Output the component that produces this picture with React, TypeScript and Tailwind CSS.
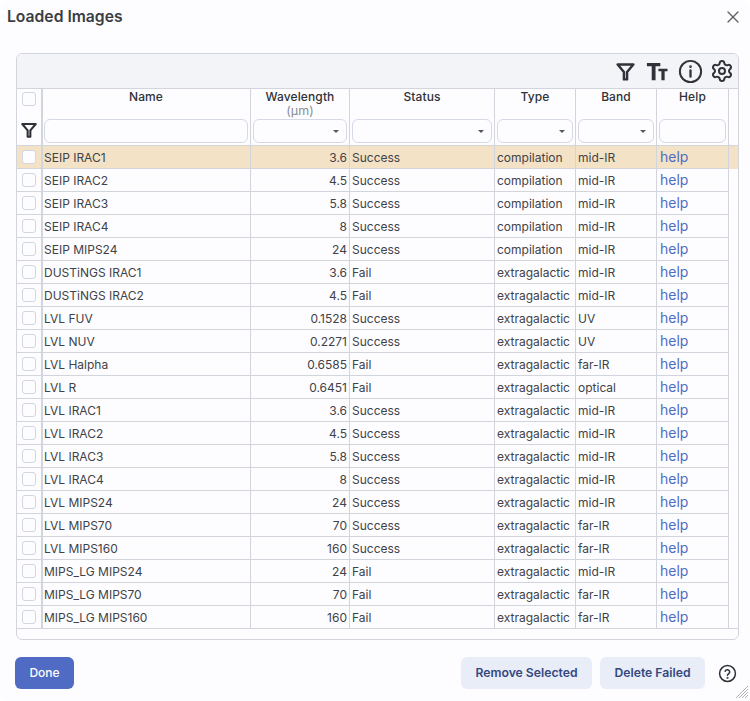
import { X, Settings } from 'lucide-react'

const ROWS = [
  ['SEIP IRAC1', '3.6', 'Success', 'compilation', 'mid-IR'],
  ['SEIP IRAC2', '4.5', 'Success', 'compilation', 'mid-IR'],
  ['SEIP IRAC3', '5.8', 'Success', 'compilation', 'mid-IR'],
  ['SEIP IRAC4', '8', 'Success', 'compilation', 'mid-IR'],
  ['SEIP MIPS24', '24', 'Success', 'compilation', 'mid-IR'],
  ['DUSTiNGS IRAC1', '3.6', 'Fail', 'extragalactic', 'mid-IR'],
  ['DUSTiNGS IRAC2', '4.5', 'Fail', 'extragalactic', 'mid-IR'],
  ['LVL FUV', '0.1528', 'Success', 'extragalactic', 'UV'],
  ['LVL NUV', '0.2271', 'Success', 'extragalactic', 'UV'],
  ['LVL Halpha', '0.6585', 'Fail', 'extragalactic', 'far-IR'],
  ['LVL R', '0.6451', 'Fail', 'extragalactic', 'optical'],
  ['LVL IRAC1', '3.6', 'Success', 'extragalactic', 'mid-IR'],
  ['LVL IRAC2', '4.5', 'Success', 'extragalactic', 'mid-IR'],
  ['LVL IRAC3', '5.8', 'Success', 'extragalactic', 'mid-IR'],
  ['LVL IRAC4', '8', 'Success', 'extragalactic', 'mid-IR'],
  ['LVL MIPS24', '24', 'Success', 'extragalactic', 'mid-IR'],
  ['LVL MIPS70', '70', 'Success', 'extragalactic', 'far-IR'],
  ['LVL MIPS160', '160', 'Success', 'extragalactic', 'far-IR'],
  ['MIPS_LG MIPS24', '24', 'Fail', 'extragalactic', 'mid-IR'],
  ['MIPS_LG MIPS70', '70', 'Fail', 'extragalactic', 'far-IR'],
  ['MIPS_LG MIPS160', '160', 'Fail', 'extragalactic', 'far-IR'],
]

const GRID = 'grid grid-cols-[26px_208px_99px_145px_81px_81px_72px_1fr]'
const CELL = 'border-r border-[#d3d5dc] overflow-hidden'
const ROW_CELL = `${CELL} border-b`

function FilterIcon({ className }: { className: string }) {
  return (
    <svg viewBox="0 0 24 24" fill="none" stroke="#2f3238" strokeWidth="2.8" strokeLinejoin="round" className={className}>
      <path d="M3 4h18l-7.200 8.500V21h-3.600v-8.500z" />
    </svg>
  )
}

function Check() {
  return <div className="w-[14px] h-[14px] rounded-[3px] border border-[#d3d6e2] bg-[#fdfdff]" />
}

function HeaderCell({ title, sub, select, first }: { title: string; sub?: string; select?: boolean; first?: boolean }) {
  return (
    <div className={`${CELL} flex flex-col items-center pr-[2px] ${first ? 'pl-[1px]' : 'pl-[2px]'}`}>
      <div className="h-[14px] mt-[1px] text-[12px] leading-[14px] font-medium text-[#2f3238] tracking-[0.1px]">{title}</div>
      <div className="h-[14px] text-[12.5px] leading-[14px] text-[#8a8d96]">{sub}</div>
      <div className="mt-[1px] w-full h-[24px] rounded-[6px] border border-[#d5d8e6] bg-[#fdfdff] flex items-center justify-end pr-[7px]">
        {select && <div className="w-0 h-0 border-x-[3px] border-x-transparent border-t-[3px] border-t-[#55585f]" />}
      </div>
    </div>
  )
}

export default function App() {
  return (
    <div className="relative w-[750px] h-[701px] bg-[#fdfdff] rounded-[8px] overflow-hidden font-['Inter',sans-serif] text-[#3f4248]">
      {/* Title */}
      <div className="flex items-start justify-between h-[53px] pl-[7px] pr-[7px] pt-[7px]">
        <h1 className="text-[15.7px] leading-[20px] font-semibold text-[#3a3d44]">Loaded Images</h1>
        <X size={20} strokeWidth={1.6} className="text-[#5d6067]" />
      </div>

      {/* Table */}
      <div className="mx-[16px] w-[723px] h-[587px] border border-[#d3d5dc] rounded-[6px] overflow-hidden flex flex-col">
        <div className="h-[35px] shrink-0 bg-[#f3f4f8] border-b border-[#d3d5dc] flex items-center justify-end pr-[4px]">
          <FilterIcon className="w-[21px] h-[21px]" />
          <svg viewBox="0 0 24 24" fill="#2f3238" className="w-[23px] h-[23px] ml-[9px]">
            <path d="M2 3h14v3.400h-5V21H7V6.400H2zM14 9h9.500v2.800h-3V21h-3.400v-9.200H14z" />
          </svg>
          <svg viewBox="0 0 24 24" fill="none" stroke="#2f3238" strokeWidth="1.9" strokeLinecap="round" className="w-[25px] h-[25px] ml-[10px]">
            <circle cx="12" cy="12" r="10.200" />
            <path d="M12 11v6" strokeWidth="2.200" />
            <circle cx="12" cy="7.400" r="0.5" strokeWidth="1.600" />
          </svg>
          <Settings size={24} strokeWidth={2} className="text-[#2f3238] ml-[7px]" />
        </div>

        <div className={`${GRID} h-[57px] shrink-0 border-b border-[#d3d5dc]`}>
          <div className="border-r-[2px] border-[#d3d5dc] flex flex-col items-center pt-[3px]">
            <Check />
            <FilterIcon className="w-[18px] h-[18px] mt-[15px]" />
          </div>
          <HeaderCell title="Name" first />
          <HeaderCell title="Wavelength" sub="(µm)" select />
          <HeaderCell title="Status" select />
          <HeaderCell title="Type" select />
          <HeaderCell title="Band" select />
          <HeaderCell title="Help" />
          <div />
        </div>

        {ROWS.map((r, i) => (
          <div key={r[0]} className={`${GRID} h-[23px] shrink-0 text-[12px] leading-[23px] ${i === 0 ? 'bg-[#f3e2c6]' : ''}`}>
            <div className="border-r-[2px] border-b border-[#d3d5dc] flex items-center justify-center"><Check /></div>
            <div className={`${ROW_CELL} pl-[1px]`}>{r[0]}</div>
            <div className={`${ROW_CELL} pr-[2px] text-right`}>{r[1]}</div>
            <div className={`${ROW_CELL} pl-[2px]`}>{r[2]}</div>
            <div className={`${ROW_CELL} pl-[2px]`}>{r[3]}</div>
            <div className={`${ROW_CELL} pl-[2px]`}>{r[4]}</div>
            <div className={`${ROW_CELL} pl-[3px] text-[14px] text-[#4d6cc4] leading-[21px]`}>help</div>
            <div className={i === ROWS.length - 1 ? 'border-b border-[#d3d5dc]' : ''} />
          </div>
        ))}
      </div>

      {/* Footer */}
      <div className="flex items-center h-[32px] mt-[17px] pl-[15px] pr-[13px]">
        <button className="w-[59px] h-[32px] rounded-[6px] bg-[#4f6bc3] text-white text-[12px] font-medium">Done</button>
        <div className="flex-1" />
        <button className="w-[131px] h-[32px] rounded-[6px] bg-[#e8edf8] text-[#34477f] text-[12.2px] font-semibold">Remove Selected</button>
        <button className="w-[105px] h-[32px] ml-[8px] rounded-[6px] bg-[#e8edf8] text-[#34477f] text-[12.2px] font-semibold">Delete Failed</button>
        <svg viewBox="0 0 24 24" fill="none" stroke="#2f3238" strokeWidth="1.9" strokeLinecap="round" className="w-[19px] h-[19px] ml-[13px]">
          <circle cx="12" cy="12" r="10" />
          <path d="M9 9.200a3 3 0 0 1 5.800 1c0 2-2.800 2.400-2.800 4" />
          <circle cx="12" cy="17.600" r="0.4" />
        </svg>
      </div>

      {/* Resize grip */}
      <svg viewBox="0 0 14 14" stroke="#9a9ca3" strokeWidth="0.8" className="absolute right-[1px] bottom-[2px] w-[14px] h-[14px]">
        <path d="M1 13 13 1M4 13 13 4M7 13l6-6M10 13l3-3" />
      </svg>
    </div>
  )
}
